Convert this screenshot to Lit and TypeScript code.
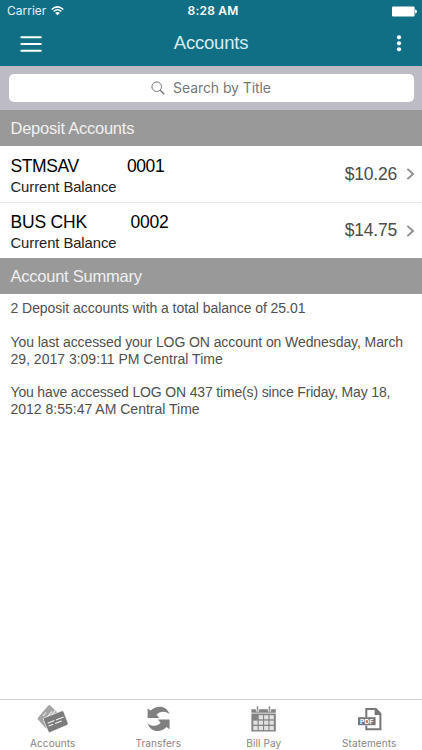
import { LitElement, html, css, svg } from "lit";
import { customElement } from "lit/decorators.js";

interface Account { name: string; id: string; balance: string; }

const accounts: Account[] = [
  { name: "STMSAV", id: "0001", balance: "$10.26" },
  { name: "BUS CHK", id: "0002", balance: "$14.75" },
];

const cards = svg`
  <path d="M14.3 5.4Q15.3 4.5 16.2 5.4L24 13L12 28.5L4 19.4Q3.2 18.4 4.1 17.4Z" fill="#a4a4a4"/>
  <path d="M12 18.5l6-7.2M14.8 18.5l6.4-7.8M9 16l3-3.5" stroke="#eee" stroke-width="1.1"/>
  <path d="M10.6 17.6L27.4 11Q29.2 10.3 29.9 12.1L34 23Q34.6 24.6 33 25.3L16.5 32.3Q14.9 33 14.2 31.4L9.6 20.4Q8.8 18.4 10.6 17.6Z" fill="#7b7b7b" stroke="#fff" stroke-width=".7"/>
  <path d="M13.6 23.3l6.8-2.7M22 20l7.6-2.9M14.6 26l4.6-1.8M21 23.5l6.8-2.6" stroke="#f2f2f2" stroke-width="1.1"/>`;
const transfers = svg`
  <path d="M7.6 8.4L10.6 10.6C16.5 4.8 26.5 5 29.6 14.2C24.8 10.6 19.6 11.2 16.6 14.8L19.4 18H7.6Z" fill="#808080"/>
  <path d="M29.6 29.2L26.6 27C20.7 32.8 10.7 32.6 7.6 23.4C12.4 27 17.6 26.4 20.6 22.8L17.8 19.6H29.6Z" fill="#808080"/>`;
const calendar = svg`
  <path d="M6.4 9.2h24.4v3.5H6.4zM6.4 13.6h24.4v18H6.4z" fill="#838383"/>
  <path d="M12.5 6.5v5M24.5 6.5v5" stroke="#fff" stroke-width="3.2"/>
  <path d="M12.5 6.3v5M24.5 6.3v5" stroke="#909090" stroke-width="1.6"/>
  ${[0, 1, 2].map((r) => [0, 1, 2, 3].filter((c) => r > 0 || c > 0).map((c) =>
    svg`<rect x=${8.3 + c * 5.4} y=${15.2 + r * 5.4} width="4.3" height="4.1" fill="#e2e2e2"/>`))}`;
const pdf = svg`
  <path d="M15.3 17V9H24.8L29.4 13.6V29.2H15.3V25.5" fill="none" stroke="#777" stroke-width="2"/>
  <path d="M23.6 8.4v6.6h6.6z" fill="#777"/>
  <rect x="7" y="17.2" width="17.6" height="8" fill="#777"/>
  <text x="15.8" y="23.7" text-anchor="middle" textLength="13.4" class="pdf">PDF</text>`;

const tabs = [
  { label: "Accounts", icon: cards },
  { label: "Transfers", icon: transfers },
  { label: "Bill Pay", icon: calendar },
  { label: "Statements", icon: pdf },
];

@customElement("app-root")
export class AppRoot extends LitElement {
  static styles = css`
    :host { display: flex; flex-direction: column; height: 750px; width: 422px; background: #fff;
      font-family: "Liberation Sans", Arial, sans-serif; overflow: hidden; }
    * { box-sizing: border-box; }
    svg { display: block; flex: none; }
    .top { background: #106f85; color: #fff; height: 65.5px; flex: none; }
    .status { height: 22px; display: grid; grid-template-columns: 1fr auto 1fr; align-items: center;
      padding: 0 5px 0 7px; font: 12px/22px Inter, sans-serif; }
    .carrier { display: flex; align-items: center; gap: 5px; color: #e3f1f4; letter-spacing: 0; }
    .time { font-weight: 600; letter-spacing: .2px; margin-left: 2px; }
    .battery { justify-self: end; }
    .nav { height: 43px; display: grid; grid-template-columns: 1fr auto 1fr; align-items: center; padding: 0 16px 0 16px; }
    .menu { margin-left: 4px; }
    .title { font-size: 18.5px; letter-spacing: -.2px; color: #d9ebef; line-height: 22px; margin-top: -1px; }
    .dots { justify-self: end; }
    .search { background: #bdbcc4; height: 44.5px; flex: none; padding: 8px 8.5px; }
    .field { height: 28.5px; background: #fff; border-radius: 5px; display: flex; align-items: center;
      justify-content: center; gap: 8px; color: #77777b; font: 14px Inter, sans-serif; letter-spacing: -.08px; }
    .section { background: #999; color: #f0f0f0; height: 36px; flex: none; padding-left: 10.5px;
      font-size: 16.5px; line-height: 37px; letter-spacing: -.24px; }
    .row { height: 56.2px; flex: none; display: flex; align-items: center; padding: 0 7px 0 10.5px; }
    .row + .row { border-top: 1px solid #e9e9eb; }
    .info { flex: 1; padding-top: 4px; }
    .name { display: flex; gap: 48px; font-size: 17.5px; line-height: 21px; color: #000; letter-spacing: -.38px; }
    .row + .row .name { gap: 43.5px; letter-spacing: -.2px; }
    .kind { font-size: 14.8px; line-height: 20px; color: #222; letter-spacing: -.07px; }
    .amount { font-size: 17.5px; color: #4c4c4c; margin-right: 9px; letter-spacing: -.2px; }
    .summary { flex: 1; padding: 6px 10.5px; font-size: 14px; line-height: 16.8px; color: #505050; }
    .summary p { margin: 0 0 16.8px; white-space: nowrap; }
    .snug { letter-spacing: -.05px; }
    .tight { letter-spacing: -.085px; }
    .tighter { letter-spacing: -.16px; }
    .tabs { height: 51px; flex: none; border-top: 1px solid #cfcfcf; display: grid; grid-template-columns: repeat(4, 1fr); }
    .tab { display: flex; flex-direction: column; align-items: center; color: #858585;
      font: 10px/12px Inter, sans-serif; letter-spacing: .1px; }
    .pdf { font: 700 6.8px Inter, sans-serif; fill: #fff; }
  `;

  render() {
    return html`
      <div class="top">
        <div class="status">
          <div class="carrier"><span>Carrier</span>
            <svg width="13" height="10" viewBox="0 0 13 10" fill="none" stroke="#fff" stroke-width="1.5">
              <path d="M.7 3.5Q6.5-1.7 12.3 3.5M2.7 5.5Q6.5 2.1 10.3 5.5"/><path d="M6.5 9.3L4.2 7Q6.5 5 8.8 7Z" fill="#fff" stroke="none"/>
            </svg></div>
          <span class="time">8:28 AM</span>
          <svg class="battery" width="26" height="11" viewBox="0 0 26 11"><rect x="1" y=".5" width="22.6" height="10" rx="1" fill="#fff"/><path d="M24 3.5q2 .2 2 2t-2 2z" fill="#fff"/></svg>
        </div>
        <div class="nav">
          <svg class="menu" width="22" height="16" viewBox="0 0 22 16"><path d="M1.3 1.2h19.6M1.3 8h19.6M1.3 14.8h19.6" stroke="#fff" stroke-width="1.9" stroke-linecap="round"/></svg>
          <span class="title">Accounts</span>
          <svg class="dots" width="14" height="18" viewBox="0 0 14 18" fill="#fff"><circle cx="7" cy="2.3" r="2.1"/><circle cx="7" cy="8.3" r="2.1"/><circle cx="7" cy="14.3" r="2.1"/></svg>
        </div>
      </div>
      <div class="search"><div class="field">
        <svg width="14" height="14" viewBox="0 0 14 14" fill="none" stroke="#77777b"><circle cx="5.7" cy="5.7" r="4.8"/><path d="M9.2 9.2l4 4" stroke-width="1.3"/></svg>
        <span>Search by Title</span></div></div>
      <div class="section">Deposit Accounts</div>
      ${accounts.map((a) => html`<div class="row">
        <div class="info"><div class="name"><span>${a.name}</span><span>${a.id}</span></div><div class="kind">Current Balance</div></div>
        <span class="amount">${a.balance}</span>
        <svg width="9" height="12" viewBox="0 0 9 12" fill="none" stroke="#8e8e8e" stroke-width="1.9"><path d="M1.4.9L7 6l-5.6 5.1"/></svg>
      </div>`)}
      <div class="section">Account Summary</div>
      <div class="summary">
        <p class="snug">2 Deposit accounts with a total balance of 25.01</p>
        <p><span class="tight">You last accessed your LOG ON account on Wednesday, March</span><br>29, 2017 3:09:11 PM Central Time</p>
        <p><span class="tighter">You have accessed LOG ON 437 time(s) since Friday, May 18,</span><br>2012 8:55:47 AM Central Time</p>
      </div>
      <div class="tabs">${tabs.map((t) => html`<div class="tab">
        <svg width="37" height="37" viewBox="0 0 37 37">${t.icon}</svg><span>${t.label}</span></div>`)}</div>`;
  }
}
